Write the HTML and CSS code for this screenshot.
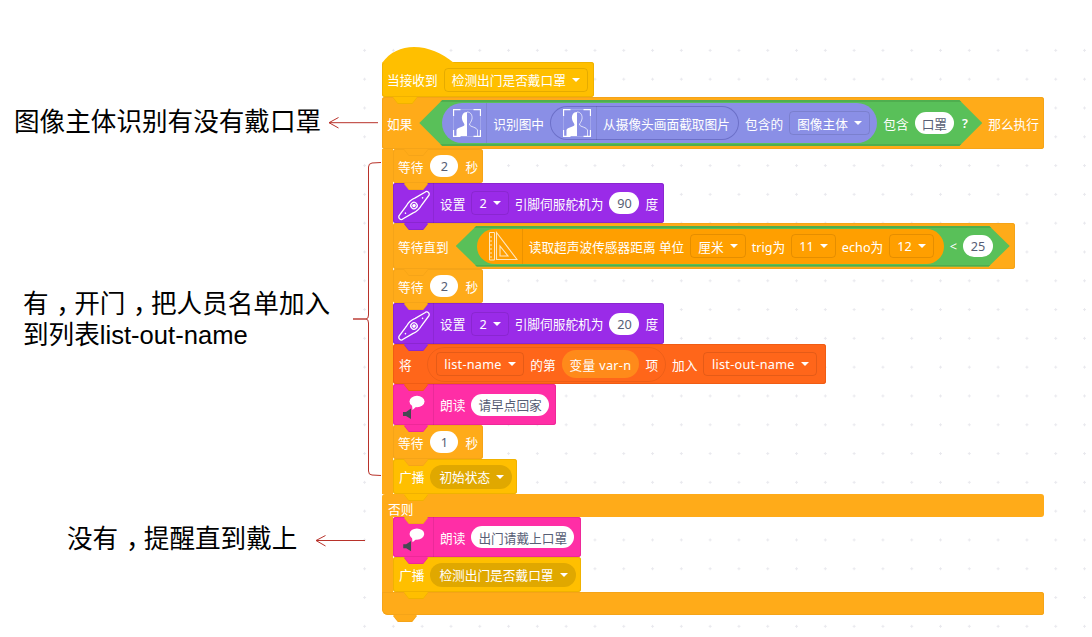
FILE: index.html
```html
<!DOCTYPE html>
<html lang="zh-CN">

<head>
    <meta charset="UTF-8">
    <meta name="viewport" content="width=device-width, initial-scale=1.0">
    <title>检测是否戴口罩</title>
    <link rel="stylesheet" href="styles.css">
</head>

<body>
    <svg class="defs" width="0" height="0">
        <symbol id="ico-person" viewBox="0 0 28 28">
            <rect x=".5" y=".5" width="27" height="27" fill="none" stroke="#fff" stroke-width=".6" opacity=".35"/>
            <path d="M.5 7V.5H7.5M20.5 .5H27.5V7M.5 21V27.5H7.5M20.5 27.5H27.5V21" fill="none" stroke="#fff" stroke-width="1.3"/>
            <path d="M14 3C10 3 8.5 6.5 9 10C9.5 13 11.5 14 11.5 16C10.5 18 4.5 18 3.5 21V27H14Z" fill="#fff"/>
            <path d="M14 3C18 3 19.5 6.5 19 10C18.5 13 16.5 14 16.5 16C17.5 18 23.5 18 24.5 21V27" fill="none" stroke="#fff" stroke-width=".9" opacity=".8"/>
        </symbol>
        <symbol id="ico-servo" viewBox="0 0 40 40">
            <g transform="translate(21 22.5) rotate(-42)" fill="none" stroke="#fff" stroke-width="1.3">
                <path d="M-17 -2.6L-6 -4.8Q0 -7 6 -4.8L17 -2.6A2.6 2.6 0 0 1 17 2.6L6 4.8Q0 7 -6 4.8L-17 2.6A2.6 2.6 0 0 1 -17 -2.6Z"/>
                <circle r="3.2"/>
                <circle r="1.1" fill="#fff"/>
                <circle cx="-11.5" r=".8" fill="#fff" stroke="none"/>
                <circle cx="11.5" r=".8" fill="#fff" stroke="none"/>
            </g>
        </symbol>
        <symbol id="ico-speak" viewBox="0 0 40 41">
            <ellipse cx="24" cy="17.5" rx="7.5" ry="5.8" fill="#fff"/>
            <path d="M19 21L19.5 26L24 22Z" fill="#fff"/>
            <path d="M10 28H13L18 24.5V35L13 32H10Z" fill="#444a52"/>
        </symbol>
    </svg>

    <main class="script">
        <div class="block hat h35">
            <span class="hump"></span>
            <span>当接收到</span>
            <span class="dd">检测出门是否戴口罩</span>
        </div>

        <div class="c-block">
            <div class="block ctrl c-head">
                <span>如果</span>
                <div class="hex hex-big">
                    <div class="pill pill-blue">
                        <svg class="ico-person"><use href="#ico-person"/></svg>
                        <span class="sep"></span>
                        <span>识别图中</span>
                        <div class="pill pill-blue inner">
                            <svg class="ico-person"><use href="#ico-person"/></svg>
                            <span class="sep"></span>
                            <span>从摄像头画面截取图片</span>
                        </div>
                        <span>包含的</span>
                        <span class="dd">图像主体</span>
                    </div>
                    <span>包含</span>
                    <span class="num wide">口罩</span>
                    <span class="qmark">?</span>
                </div>
                <span>那么执行</span>
            </div>

            <div class="c-body">
                <div class="block ctrl wait">
                    <span>等待</span><span class="num">2</span><span>秒</span>
                </div>
                <div class="block servo h40 with-icon">
                    <svg class="ico-block"><use href="#ico-servo"/></svg>
                    <span class="sep"></span>
                    <span>设置</span>
                    <span class="dd">2</span>
                    <span>引脚伺服舵机为</span>
                    <span class="num">90</span>
                    <span>度</span>
                </div>
                <div class="block ctrl h46">
                    <span>等待直到</span>
                    <div class="hex hex-small">
                        <div class="pill pill-orange">
                            <svg class="ico-ruler" viewBox="0 0 30 30">
                                <path d="M1.5 1.5H6.5V29H1.5ZM1.5 6H4M1.5 10H4M1.5 14H4M1.5 18H4M1.5 22H4M1.5 26H4" fill="none" stroke="#ffe6bf" stroke-width="1"/>
                                <path d="M8.5 1.5L29 28.5H8.5ZM12 15V25H20Z" fill="none" stroke="#ffe6bf" stroke-width="1.1"/>
                            </svg>
                            <span class="sep"></span>
                            <span>读取超声波传感器距离 单位</span>
                            <span class="dd">厘米</span>
                            <span>trig为</span>
                            <span class="dd">11</span>
                            <span>echo为</span>
                            <span class="dd">12</span>
                        </div>
                        <span class="lt">&lt;</span>
                        <span class="num">25</span>
                    </div>
                </div>
                <div class="block ctrl wait">
                    <span>等待</span><span class="num">2</span><span>秒</span>
                </div>
                <div class="block servo h41 with-icon">
                    <svg class="ico-block"><use href="#ico-servo"/></svg>
                    <span class="sep"></span>
                    <span>设置</span>
                    <span class="dd">2</span>
                    <span>引脚伺服舵机为</span>
                    <span class="num">20</span>
                    <span>度</span>
                </div>
                <div class="block list h40">
                    <span class="list-label">将</span>
                    <div class="ring">
                        <span class="dd dd-latin">list-name</span>
                        <span>的第</span>
                        <span class="pill-var">变量 var-n</span>
                        <span>项</span>
                    </div>
                    <span>加入</span>
                    <span class="dd dd-latin">list-out-name</span>
                </div>
                <div class="block speak h41 with-icon">
                    <svg class="ico-block"><use href="#ico-speak"/></svg>
                    <span class="sep"></span>
                    <span>朗读</span>
                    <span class="num wide">请早点回家</span>
                </div>
                <div class="block ctrl wait">
                    <span>等待</span><span class="num">1</span><span>秒</span>
                </div>
                <div class="block event h35">
                    <span>广播</span>
                    <span class="dd dd-round">初始状态</span>
                </div>
            </div>

            <div class="block ctrl c-mid">否则</div>

            <div class="c-body">
                <div class="block speak h40 with-icon">
                    <svg class="ico-block"><use href="#ico-speak"/></svg>
                    <span class="sep"></span>
                    <span>朗读</span>
                    <span class="num wide">出门请戴上口罩</span>
                </div>
                <div class="block event h35">
                    <span>广播</span>
                    <span class="dd dd-round">检测出门是否戴口罩</span>
                </div>
            </div>

            <div class="block ctrl c-foot"></div>
        </div>
    </main>

    <!-- 左边的说明文字和红色箭头 -->
    <p class="note note-1">图像主体识别有没有戴口罩</p>
    <p class="note note-2">有<span class="comma">，</span>开门<span class="comma">，</span>把人员名单加入<br>到列表list-out-name</p>
    <p class="note note-3">没有<span class="comma">，</span>提醒直到戴上</p>

    <svg class="marks" width="1092" height="637" viewBox="0 0 1092 637">
        <path d="M378 122.7H329M338.5 117.5L329 122.7L338.5 128" fill="none" stroke="#b8322a" stroke-width="1"/>
        <path d="M365 540.5H316M325.5 535.5L316 540.5L325.5 546" fill="none" stroke="#b8322a" stroke-width="1"/>
        <path d="M381 162.5L372 163Q368.5 163.5 368.5 167V315Q368.5 319 366 319Q368.5 319 368.5 323V471Q368.5 475 372 475L381 475.5" fill="none" stroke="#b8322a" stroke-width="1"/>
        <path d="M353 319H366" fill="none" stroke="#b8322a" stroke-width="1.4"/>
    </svg>
</body>

</html>
```

FILE: styles.css
```css
html,
body {
    margin: 0;
    padding: 0;
    height: 100%;
    overflow: hidden;
    background-color: #fff;
}

body {
    position: relative;
    font-family: "Noto Sans", "Noto Sans CJK SC", sans-serif;
}

.defs {
    position: absolute;
}

/* 画布，右边带点阵 */
.script {
    box-sizing: border-box;
    height: 601px;
    margin: 36px 0 0 350px;
    padding: 26px 0 0 32px;
    background-image: radial-gradient(circle, #e9e9ee 1px, transparent 1.4px);
    background-size: 28.8px 28.8px;
    background-position: 0.2px 0;
    font-size: 12.7px;
    color: #fff;
}

/* 积木 */
.block {
    --c: #ffab19;
    --edge: #e8971a;
    position: relative;
    box-sizing: border-box;
    display: flex;
    align-items: center;
    gap: 6px;
    width: fit-content;
    padding: 0 5px;
    background-color: var(--c);
    border-radius: 3px;
    box-shadow: inset 0 0 0 1px var(--edge);
    white-space: nowrap;
}

/* 积木底部的小凸块 */
.block::before,
.block::after {
    content: "";
    position: absolute;
    left: 11px;
    top: 100%;
    width: 24px;
    height: 6px;
    clip-path: polygon(0 0, 100% 0, 80% 100%, 20% 100%);
    z-index: 2;
}

.block::before {
    margin-top: 1px;
    background-color: var(--edge);
}

.block::after {
    background-color: var(--c);
}

.ctrl {
    --c: #ffab19;
    --edge: #f5a418;
}

.hat,
.event {
    --c: #ffbf00;
    --edge: #f0b200;
}

.servo {
    --c: #9a2be8;
    --edge: #8a26d0;
    padding-right: 6px;
}

.list {
    --c: #ff661a;
    --edge: #f05c14;
    padding-right: 9px;
}

.speak {
    --c: #ff2ea6;
    --edge: #ee2898;
    padding-right: 7px;
}

.event {
    padding-left: 6px;
}

.wait {
    height: 34px;
    gap: 7px;
}

.wait .num {
    min-width: 28px;
}

.h35 { height: 35px; }
.h40 { height: 40px; }
.h41 { height: 41px; }
.h46 { height: 46px; }

.hat {
    width: 212px;
}

.hump {
    position: absolute;
    left: 0;
    bottom: 100%;
    width: 72px;
    height: 16px;
    margin-bottom: -1px;
    background-color: var(--c);
    clip-path: path("M0 16C8 5 19 0 32 0C46 0 60 6 72 16Z");
}

/* 带图标的积木 */
.with-icon {
    padding-left: 0;
}

.ico-block {
    width: 40px;
    height: 100%;
    margin-right: -6px;
    flex: none;
}

.sep {
    align-self: stretch;
    flex: none;
    width: 1px;
    background-color: rgba(0, 0, 0, 0.08);
}

.ico-person {
    width: 28px;
    height: 28px;
    margin-right: -1px;
    flex: none;
}

.ico-ruler {
    width: 30px;
    height: 30px;
    margin-right: -2px;
    flex: none;
}

/* 如果 ... 那么执行 */
.c-head {
    width: 662px;
    height: 52px;
    justify-content: space-between;
    gap: 0;
}

.c-head::before,
.c-head::after,
.c-mid::before,
.c-mid::after {
    left: 22px;
}

.c-body {
    border-left: 11px solid #ffab19;
}

.c-mid {
    width: 662px;
    height: 23px;
    padding: 5px 0 0 6px;
    border-radius: 3px 3px 3px 0;
    box-shadow: none;
}

.c-foot {
    width: 662px;
    height: 23px;
    border-radius: 0 3px 3px 6px;
}

.hex {
    display: flex;
    align-items: center;
    gap: 6px;
    background-color: #59c059;
}

.hex-big {
    width: 563px;
    height: 46px;
    padding-left: 23px;
    margin-left: 1px;
    box-sizing: border-box;
    clip-path: polygon(23px 0, calc(100% - 23px) 0, 100% 50%, calc(100% - 23px) 100%, 23px 100%, 0 50%);
    box-shadow: inset 0 2px 0 #4fae4f, inset 0 -2px 0 #4fae4f;
}

.hex-small {
    width: 554px;
    height: 41px;
    padding-left: 21px;
    margin-left: 1px;
    box-sizing: border-box;
    clip-path: polygon(21px 0, calc(100% - 21px) 0, 100% 50%, calc(100% - 21px) 100%, 21px 100%, 0 50%);
    box-shadow: inset 0 2px 0 #4fae4f, inset 0 -2px 0 #4fae4f;
}

.pill {
    display: flex;
    align-items: center;
    gap: 6px;
    box-sizing: border-box;
    border-radius: 20px;
}

.pill-blue {
    width: 435px;
    height: 40px;
    padding-left: 11px;
    background-color: #8a8fe6;
}

.pill-blue.inner {
    width: 189px;
    height: 34px;
    padding-left: 13px;
    box-shadow: inset 0 0 0 1px #6c70c8;
}

.pill-orange {
    width: 467px;
    height: 35px;
    padding-left: 11px;
    background-color: #ff9f00;
}

/* 下拉框和输入框 */
.dd {
    display: inline-flex;
    align-items: center;
    box-sizing: border-box;
    height: 24px;
    padding: 0 7px;
    gap: 6px;
    border: 1px solid rgba(0, 0, 0, 0.1);
    border-radius: 4px;
}

.dd::after {
    content: "";
    width: 0;
    height: 0;
    border-left: 4px solid transparent;
    border-right: 4px solid transparent;
    border-top: 4px solid #fff;
}

.dd-round {
    padding: 0 8px 0 9px;
    border: none;
    border-radius: 12px;
    background-color: #e0a800;
}

.dd-latin {
    padding: 0 7.5px;
    letter-spacing: 0.25px;
}

.num {
    display: inline-flex;
    justify-content: center;
    align-items: center;
    min-width: 30px;
    height: 22px;
    padding: 0 1px;
    box-sizing: border-box;
    background-color: #fff;
    border-radius: 11px;
    color: #575e75;
}

.num.wide {
    padding: 0 7px;
}

.qmark {
    margin-left: 2px;
    font-weight: 600;
}

.list-label {
    margin: 0 9px 0 1px;
}

.ring {
    display: flex;
    align-items: center;
    gap: 6px;
    box-sizing: border-box;
    height: 35px;
    padding: 0 7px 0 8px;
    border: 1px solid rgba(0, 0, 0, 0.07);
    border-radius: 18px;
}

.pill-var {
    display: inline-flex;
    align-items: center;
    height: 28px;
    padding: 0 8px;
    border-radius: 14px;
    background-color: #ff8a1a;
    letter-spacing: 0.3px;
}

/* 说明文字 */
.note {
    position: absolute;
    margin: 0;
    font-family: "Liberation Sans", "Noto Sans CJK SC", sans-serif;
    font-size: 25.6px;
    line-height: 31px;
    color: #000;
    white-space: nowrap;
}

.note-1 {
    left: 14px;
    top: 107px;
}

.note-2 {
    left: 23px;
    top: 289px;
}

.note-3 {
    left: 67px;
    top: 524px;
}

/* 逗号放在一格的中间 */
.comma {
    display: inline-block;
    font-feature-settings: "halt";
    margin: 0 0.2em 0 0.3em;
}

.marks {
    position: absolute;
    left: 0;
    top: 0;
    z-index: 3;
    pointer-events: none;
}
```
